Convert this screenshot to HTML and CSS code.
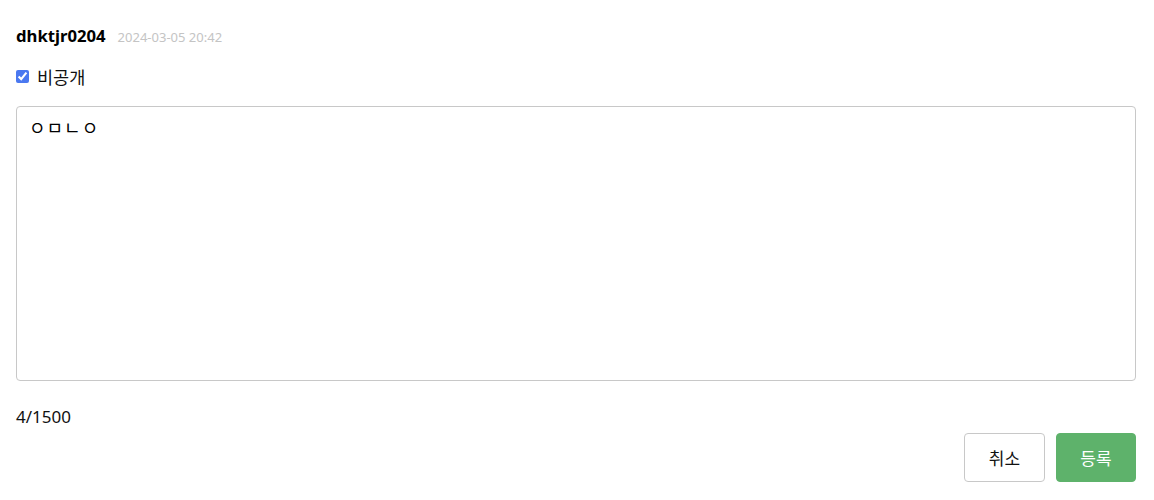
FILE: index.html
```html
<!DOCTYPE html>
<html lang="ko">
<head>
<meta charset="utf-8">
<link rel="stylesheet" href="styles.css">
</head>
<body>
<div class="comment-form">
  <div class="meta">
    <span class="author">dhktjr0204</span>
    <span class="date">2024-03-05 20:42</span>
  </div>
  <label class="private">
    <input type="checkbox" checked>
    <span>비공개</span>
  </label>
  <textarea class="editor">ㅇㅁㄴㅇ</textarea>
  <div class="count">4/1500</div>
  <div class="actions">
    <button class="btn cancel">취소</button>
    <button class="btn submit">등록</button>
  </div>
</div>
</body>
</html>
```
FILE: styles.css
```css
html, body {
  margin: 0;
  padding: 0;
  background: #fff;
}
body {
  font-family: "Noto Sans", "Noto Sans CJK KR", sans-serif;
  color: #111;
}
.comment-form {
  padding: 24px 18px 0 16px;
  display: flex;
  flex-direction: column;
}
.meta {
  display: flex;
  align-items: baseline;
  gap: 12px;
  height: 24px;
}
.author {
  font-size: 16.7px;
  font-weight: 700;
  color: #000;
}
.date {
  font-size: 13px;
  color: #c4c4c4;
}
.private {
  display: flex;
  align-items: center;
  gap: 8px;
  margin-top: 16px;
  font-size: 17.5px;
  height: 24px;
}
.private input {
  margin: 0;
  width: 13px;
  height: 13px;
  accent-color: #4a78f0;
}
.editor {
  margin-top: 18px;
  box-sizing: border-box;
  width: 100%;
  height: 275px;
  border: 1px solid #c8c8c8;
  border-radius: 4px;
  padding: 12px 12px;
  font-family: "DejaVu Sans Mono", "Noto Sans CJK KR", monospace;
  font-size: 18px;
  line-height: 20px;
  letter-spacing: 1px;
  resize: none;
  outline: none;
  color: #000;
}
.count {
  margin-top: 24px;
  font-size: 17px;
  line-height: 24px;
}
.actions {
  display: flex;
  justify-content: flex-end;
  gap: 11px;
  margin-top: 4px;
}
.btn {
  height: 49px;
  width: 81px;
  border-radius: 4px;
  font-family: "Noto Sans CJK KR", sans-serif;
  font-size: 17px;
  cursor: pointer;
}
.cancel {
  background: #fff;
  border: 1px solid #c8c8c8;
  color: #111;
}
.submit {
  width: 80px;
  background: #5eb26b;
  border: 1px solid #5eb26b;
  color: #fff;
}
```
